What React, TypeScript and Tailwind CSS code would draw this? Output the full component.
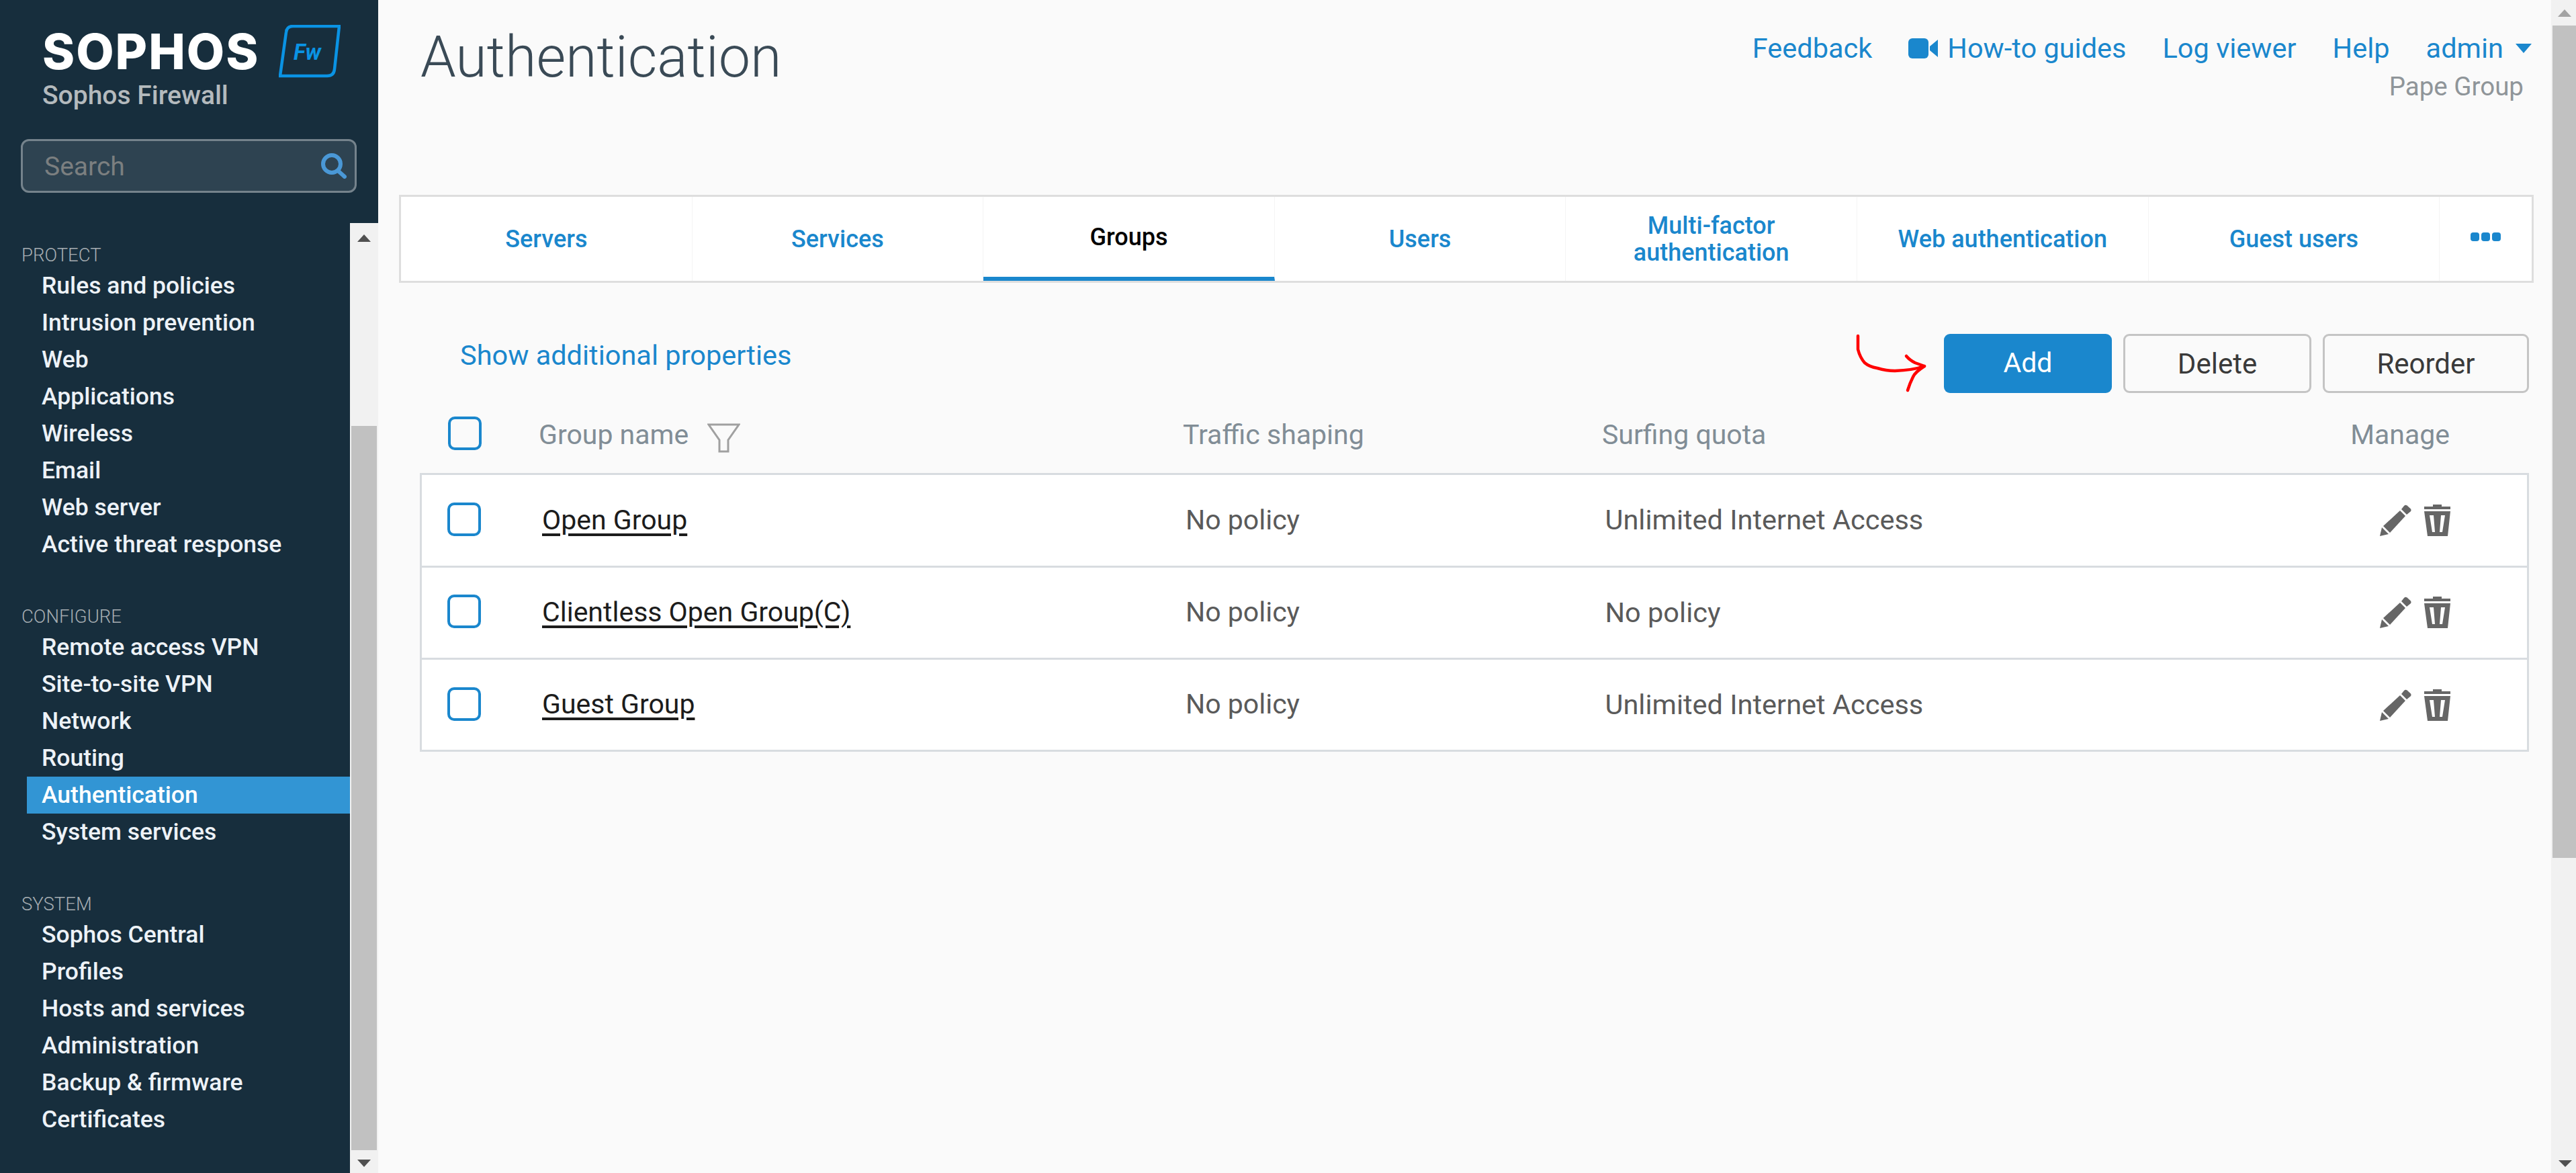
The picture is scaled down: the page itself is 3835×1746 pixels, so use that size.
const navGroups = [
  { title: "PROTECT", items: ["Rules and policies", "Intrusion prevention", "Web", "Applications", "Wireless", "Email", "Web server", "Active threat response"] },
  { title: "CONFIGURE", items: ["Remote access VPN", "Site-to-site VPN", "Network", "Routing", "Authentication", "System services"] },
  { title: "SYSTEM", items: ["Sophos Central", "Profiles", "Hosts and services", "Administration", "Backup & firmware", "Certificates"] },
];
const tabs = ["Servers", "Services", "Groups", "Users", "Multi-factor authentication", "Web authentication", "Guest users"];
const rows = [
  ["Open Group", "No policy", "Unlimited Internet Access"],
  ["Clientless Open Group(C)", "No policy", "No policy"],
  ["Guest Group", "No policy", "Unlimited Internet Access"],
];
function Pencil() {
  return (
    <svg width="47" height="47" viewBox="0 0 47 47" fill="#666">
      <path d="M0 47 L3 34 L13 44 Z" />
      <path d="M5 32 L30 9 L38 17 L15 42 Z" />
      <path d="M32 7 L36 2 Q38 0 40.5 1.5 L45.5 6 Q47.5 8 45.5 10.5 L40 15 Z" />
    </svg>
  );
}
function Trash() {
  return (
    <svg width="39" height="47" viewBox="0 0 39 47" fill="#666">
      <path d="M0 3 H13 V0 H26 V3 H39 V7 H0 Z" />
      <path fillRule="evenodd" d="M0 10 H39 L35 47 H5 Z M8 16 L12 41 H16 L14 16 Z M25 16 L23 41 H27 L31 16 Z" />
    </svg>
  );
}
function Check({ cls }: { cls: string }) {
  return <div className={"w-[50px] h-[50px] shrink-0 rounded-[10px] border-[4px] border-[#1a87cd] " + cls} />;
}
export default function App() {
  return (
    <div className="flex w-[3835px] h-[1746px] overflow-hidden bg-[#fafafa] font-['Roboto',sans-serif]">
      <aside className="w-[563px] shrink-0 bg-[#172e3d] flex flex-col">
        <div className="pl-[63px] pt-[37px] h-[332px] shrink-0 relative">
          <div className="flex items-start gap-[32px]">
            <div className="w-[320px]">
              <div className="mt-[5px] text-[73px] leading-[70px] font-extrabold text-white tracking-[2px] font-['Inter',sans-serif] whitespace-nowrap">SOPHOS</div>
              <div className="mt-[8px] text-[39px] leading-[44px] font-medium text-[#b4babd] whitespace-nowrap">Sophos Firewall</div>
            </div>
            <svg width="92" height="80" viewBox="0 0 92 80" fill="none" className="shrink-0">
              <path d="M18 2 H90 L83 66 Q82 76 72 76 H2 L11 11 Q12 2 21 2 Z" stroke="#0a93e4" strokeWidth="4.5" />
              <text x="22" y="52" fontSize="33" fontStyle="italic" fontWeight="700" fill="#0a93e4" fontFamily="Roboto">Fw</text>
            </svg>
          </div>
          <div className="absolute left-[31px] top-[207px] w-[500px] h-[80px] rounded-[12px] border-[3px] border-[#75838c] bg-[#2e4351] flex items-center justify-between pl-[32px] pr-[12px]">
            <span className="mt-[2px] text-[39px] text-[#7b7f80]">Search</span>
            <svg width="38" height="38" viewBox="0 0 38 38" fill="none" stroke="#4a98d6" strokeWidth="6">
              <circle cx="16" cy="16" r="13" />
              <path d="M25 26 L35 35" strokeLinecap="round" />
            </svg>
          </div>
        </div>
        <div className="flex-1 flex min-h-0">
          <nav className="flex-1 pl-[32px] pt-[30px]">
            {navGroups.map((g) => (
              <div key={g.title} className="mb-[62px]">
                <div className="text-[27.5px] leading-[36px] font-light text-[#a6adb2]">{g.title}</div>
                <ul className="pl-[8px]">
                  {g.items.map((it) => (
                    <li key={it} className={"h-[55px] leading-[55px] pl-[22px] text-[35.5px] font-medium text-[#edf2f7] " + (it === "Authentication" ? "bg-[#3295d4] text-white" : "")}>{it}</li>
                  ))}
                </ul>
              </div>
            ))}
          </nav>
          <div className="w-[42px] shrink-0 bg-[#f1f1f1] flex flex-col justify-between items-center">
            <div className="h-[302px] w-full flex justify-center pt-[17px]"><div className="w-0 h-0 border-x-[10px] border-x-transparent border-b-[11px] border-b-[#505050]" /></div>
            <div className="flex-1 w-[38px] bg-[#c1c1c1]" />
            <div className="h-[34px] w-full flex justify-center pt-[14px]"><div className="w-0 h-0 border-x-[10px] border-x-transparent border-t-[11px] border-t-[#505050]" /></div>
          </div>
        </div>
      </aside>
      <main className="flex-1 min-w-0 flex flex-col pl-[31px] pr-[26px]">
        <header className="h-[290px] shrink-0 flex justify-between pl-[32px]">
          <h1 className="pt-[40px] text-[84.5px] leading-[92px] font-light text-[#3a4a56]">Authentication</h1>
          <div className="pt-[47px] pr-[3px] flex flex-col items-end">
            <div className="flex items-center gap-[54px] text-[41.5px] leading-[50px] text-[#1a87cd]">
              <span>Feedback</span>
              <span className="flex items-center gap-[14px]">
                <svg width="44" height="30" viewBox="0 0 44 30" fill="#1a87cd"><rect x="0" y="0" width="30" height="30" rx="6" /><path d="M32 12 L44 2 V28 L32 18 Z" /></svg>
                How-to guides
              </span>
              <span>Log viewer</span>
              <span>Help</span>
              <span className="flex items-center gap-[18px]">admin<span className="w-0 h-0 border-x-[12px] border-x-transparent border-t-[14px] border-t-[#1a87cd]" /></span>
            </div>
            <div className="mt-[9px] pr-[12px] text-[38.5px] leading-[46px] text-[#8f9599]">Pape Group</div>
          </div>
        </header>
        <div className="h-[131px] shrink-0 flex border-[3px] border-[#dedede] bg-white">
          {tabs.map((t) => (
            <div key={t} className={"w-[433.6px] shrink-0 flex items-center justify-center text-center px-[40px] text-[36px] leading-[40px] border-r-[1px] border-[#f4f4f4] font-medium " + (t === "Groups" ? "text-black border-b-[6px] border-b-[#1a87cd]" : "text-[#1a87cd]")}>{t}</div>
          ))}
          <div className="flex-1 flex items-center justify-center gap-[3px] pb-[6px]">
            {[0, 1, 2].map((i) => <span key={i} className="w-[13px] h-[13px] rounded-[4px] bg-[#1a87cd]" />)}
          </div>
        </div>
        <div className="mt-[75px] flex items-center justify-between pl-[91px] pr-[7px]">
          <span className="mb-[24px] text-[41.5px] leading-[50px] text-[#1a87cd]">Show additional properties</span>
          <div className="flex items-center gap-[17px]">
            <svg width="105" height="90" viewBox="0 0 105 90" fill="none" stroke="#ff0000" strokeWidth="4.5" strokeLinecap="round" strokeLinejoin="round" className="mr-[9px]">
              <path d="M3 4 L3 24 Q6 36 13 44 Q20 50 32 52 Q45 56 58 56 Q85 55 102 49" />
              <path d="M75 34 Q80 40 88 44 L102 49 Q88 58 85 65 Q80 75 77 85" />
            </svg>
            <button className="w-[250px] h-[88px] rounded-[9px] bg-[#1a87cd] text-white text-[41px]">Add</button>
            <button className="w-[280px] h-[88px] rounded-[9px] border-[3px] border-[#c4c4c4] bg-[#fafafa] text-[#3a3a3a] text-[42px]">Delete</button>
            <button className="w-[307px] h-[88px] rounded-[9px] border-[3px] border-[#c4c4c4] bg-[#fafafa] text-[#3a3a3a] text-[42px]">Reorder</button>
          </div>
        </div>
        <div className="pr-[7px]">
          <div className="mt-[6px] h-[112px] flex items-center pl-[73px] text-[41px] text-[#818d96]">
            <Check cls="mb-[6px]" />
            <span className="ml-[85px] w-[959px] flex items-center gap-[28px]">
              Group name
              <svg width="49" height="44" viewBox="0 0 49 44" fill="none" stroke="#a0a0a0" strokeWidth="3" className="translate-y-[4px]"><path d="M2 2 H47 L31 25 V42 H18 V25 Z" /></svg>
            </span>
            <span className="w-[624px]">Traffic shaping</span>
            <span className="flex-1">Surfing quota</span>
            <span className="mr-[118px]">Manage</span>
          </div>
          <div className="ml-[31px] border-[3px] border-[#d8dce0] bg-white">
            {rows.map((r, i) => (
              <div key={r[0]} className={"flex items-center pl-[38px] text-[41px] text-[#5a5a5a] " + (i < 2 ? "h-[137.5px] border-b-[3px] border-[#d8dce0]" : "h-[134px]")}>
                <Check cls="mb-[3px]" />
                <span className="ml-[91px] w-[958px]"><span className="text-[#1c1c1c] underline underline-offset-[6px]">{r[0]}</span></span>
                <span className="w-[624.5px]">{r[1]}</span>
                <span className="flex-1 text-[41.5px]">{r[2]}</span>
                <span className="flex items-center gap-[19px] mr-[114px]"><Pencil /><Trash /></span>
              </div>
            ))}
          </div>
        </div>
      </main>
      <div className="w-[37px] shrink-0 bg-[#f1f1f1] flex flex-col items-end relative">
        <div className="h-[38px] w-[35px] flex items-center justify-center"><div className="w-0 h-0 border-x-[10px] border-x-transparent border-b-[11px] border-b-[#a3a3a3]" /></div>
        <div className="h-[1239px] w-[35px] bg-[#c1c1c1]" />
        <div className="absolute bottom-[9px] right-[6px] w-0 h-0 border-x-[10px] border-x-transparent border-t-[10px] border-t-[#505050]" />
      </div>
    </div>
  );
}
